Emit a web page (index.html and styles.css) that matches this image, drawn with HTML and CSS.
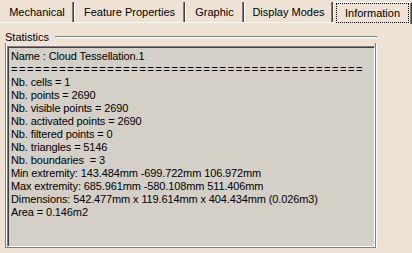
FILE: index.html
```html
<!DOCTYPE html>
<html lang="en">
<head>
  <meta charset="UTF-8">
  <title>Properties - Information</title>
  <link rel="stylesheet" href="styles.css">
</head>
<body>

<div class="tabs">
  <div class="tab tab-mechanical">Mechanical</div>
  <div class="tab tab-feature">Feature Properties</div>
  <div class="tab tab-graphic">Graphic</div>
  <div class="tab tab-display">Display Modes</div>
  <div class="tab tab-info active"><span class="focus">Information</span></div>
</div>

<div class="group">
  <div class="group-head">
    <span class="group-label">Statistics</span>
    <span class="rule"></span>
  </div>
  <div class="group-body">
    <div class="stats">Name : Cloud Tessellation.1
<span class="sep">============================================</span>
Nb. cells = 1
Nb. points = 2690
Nb. visible points = 2690
Nb. activated points = 2690
Nb. filtered points = 0
Nb. triangles = 5146
Nb. boundaries  = 3
Min extremity: 143.484mm -699.722mm 106.972mm
Max extremity: 685.961mm -580.108mm 511.406mm
Dimensions: 542.477mm x 119.614mm x 404.434mm (0.026m3)
Area = 0.146m2</div>
  </div>
</div>

</body>
</html>
```

FILE: styles.css
```css
:root {
  --fond: #eee2d4;
  --gris: #d4d0c8;
  --ombre: #808080;
  --sombre: #404040;
}

body {
  margin: 0;
  background-color: var(--fond);
  font-family: "Liberation Sans", Arial, sans-serif;
  font-size: 11px;
  color: black;
}

.tabs {
  display: flex;
  box-sizing: border-box;
  height: 23px;
  border-bottom: 1px solid white;
}

.tab {
  box-sizing: border-box;
  height: 20px;
  margin-top: 2px;
  line-height: 20px;
  text-align: center;
  border-left: 1px solid white;
  border-right: 1px solid var(--sombre);
  box-shadow: inset -1px 0 var(--ombre);
}

.tab-mechanical { width: 74px; border-left-color: var(--fond); }
.tab-feature { width: 111px; }
.tab-graphic { width: 59px; }
.tab-display { width: 89px; }
.tab-info { width: 79px; }

.tab.active {
  border-top: 1px solid white;
  height: 22px;
  margin-bottom: -1px;
  background-color: var(--fond);
  line-height: 19px;
  padding: 0 2px;
}

.focus {
  display: block;
  height: 18px;
  line-height: 18px;
  border: 1px dotted black;
}

.group {
  margin: 7px 0 0 5px;
  width: 372px;
}

.group-head {
  display: flex;
  align-items: center;
  height: 13px;
}

.group-label {
  padding: 0 6px 0 0;
}

.rule {
  flex: 1;
  height: 0;
  border-top: 1px solid var(--ombre);
  border-bottom: 1px solid white;
}

.group-body {
  width: 371px;
  box-sizing: border-box;
  border: 1px solid var(--ombre);
  border-top: none;
  box-shadow: inset 1px 0 white, 1px 1px white;
  padding: 3px 0 0 1px;
}

.stats {
  box-sizing: border-box;
  width: 368px;
  height: 201px;
  background-color: var(--gris);
  border-top: 1px solid var(--ombre);
  border-left: 1px solid var(--ombre);
  border-right: 1px solid white;
  border-bottom: 1px solid white;
  box-shadow: inset 1px 1px var(--sombre), inset -1px -1px var(--gris);
  padding: 3px 0 0 3px;
  line-height: 13px;
  letter-spacing: -0.12px;
  white-space: pre;
  overflow: hidden;
}

.sep {
  letter-spacing: 1.6px;
}
```
